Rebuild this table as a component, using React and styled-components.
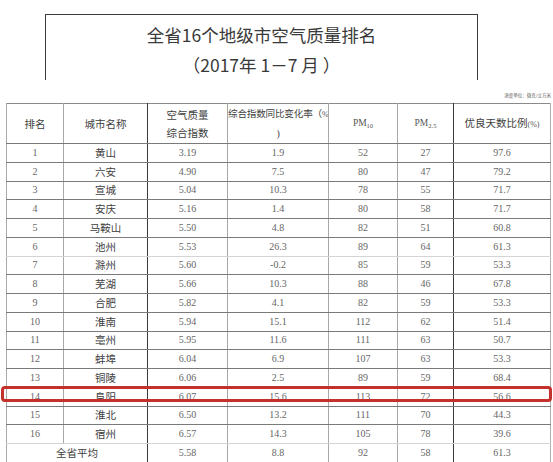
import React from 'react';
import styled, {createGlobalStyle} from 'styled-components';

const GlobalStyle = createGlobalStyle`
  html, body {
    margin: 0;
    padding: 0;
    background: #ffffff;
  }
`;

const CJK = `"Noto Sans CJK SC", "Noto Sans", sans-serif`;
const SERIF = `"Liberation Serif", "Noto Sans CJK SC", serif`;

const Page = styled.div`
  width: 553px;
  height: 462px;
  overflow: hidden;
  background: #fff;
  padding-top: 14px;
  box-sizing: border-box;
`;

const TitleBox = styled.div`
  margin-left: 45px;
  width: 433px;
  height: 66px;
  box-sizing: border-box;
  border: 1.5px solid #3c3c3c;
  border-bottom: none;
  display: flex;
  flex-direction: column;
  align-items: center;
  padding-top: 5px;
  font-family: ${CJK};
  color: #3a3a3a;
`;

const TitleLine = styled.div`
  font-size: 17.5px;
  line-height: 30px;
  height: 31px;
`;

const UnitNote = styled.div`
  display: flex;
  justify-content: flex-end;
  padding: 12px 2px 0 0;
  height: 11px;
  font-family: ${CJK};
  font-size: 4.5px;
  line-height: 6px;
  color: #555;
`;

const TableWrap = styled.div`
  position: relative;
  margin-left: 6px;
  width: 544px;
`;

const Table = styled.table`
  width: 544px;
  table-layout: fixed;
  border-collapse: collapse;
  border-top: 1px solid #8a8a8a;
`;

const HeadRow = styled.tr`
  height: 37px;
`;

const Row = styled.tr`
  height: 18.75px;
`;

const Cell = styled.td`
  padding: 0;
  text-align: center;
  vertical-align: middle;
  overflow: hidden;
  font-family: ${p => (p.$cjk ? CJK : SERIF)};
  font-size: ${p => (p.$cjk ? '10.5px' : '10px')};
  color: ${p => (p.$cjk ? '#3e3e3e' : '#666')};
  line-height: 12px;
  white-space: nowrap;
  border-bottom: 1px solid ${p => (p.$light ? '#d4d4d4' : '#7a7a7a')};
  border-left: 1px solid ${p => (p.$dark ? '#3a3a3a' : '#a8a8a8')};
  &:last-child {
    border-right: 1px solid #b0b0b0;
  }
`;

const HeadCell = styled(Cell)`
  font-family: ${CJK};
  font-size: ${p => (p.$tight ? '9.6px' : '10.5px')};
  letter-spacing: ${p => (p.$tight ? '-0.2px' : '0')};
  color: #3e3e3e;
  line-height: 18px;
`;

const Pm = styled.span`
  font-family: ${SERIF};
  font-size: 9.5px;
  color: #555;
  sub {
    font-size: 6.5px;
    vertical-align: -2px;
  }
`;

const Pct = styled.span`
  font-family: ${SERIF};
  font-size: 8px;
  letter-spacing: 0;
  color: #555;
`;

const Paren = styled.span`
  font-family: ${SERIF};
  font-size: 10px;
  color: #444;
`;

const Highlight = styled.div`
  position: absolute;
  left: -5px;
  width: 551px;
  height: 16px;
  box-sizing: border-box;
  border: 3px solid #c4302b;
  border-radius: 4px;
  pointer-events: none;
`;

const widths = [57, 84, 80, 101, 69, 56, 97];

const rows = [
  ['1', '黄山', '3.19', '1.9', '52', '27', '97.6'],
  ['2', '六安', '4.90', '7.5', '80', '47', '79.2'],
  ['3', '宣城', '5.04', '10.3', '78', '55', '71.7'],
  ['4', '安庆', '5.16', '1.4', '80', '58', '71.7'],
  ['5', '马鞍山', '5.50', '4.8', '82', '51', '60.8'],
  ['6', '池州', '5.53', '26.3', '89', '64', '61.3', true],
  ['7', '滁州', '5.60', '-0.2', '85', '59', '53.3'],
  ['8', '芜湖', '5.66', '10.3', '88', '46', '67.8'],
  ['9', '合肥', '5.82', '4.1', '82', '59', '53.3'],
  ['10', '淮南', '5.94', '15.1', '112', '62', '51.4'],
  ['11', '亳州', '5.95', '11.6', '111', '63', '50.7'],
  ['12', '蚌埠', '6.04', '6.9', '107', '63', '53.3'],
  ['13', '铜陵', '6.06', '2.5', '89', '59', '68.4'],
  ['14', '阜阳', '6.07', '15.6', '113', '72', '56.6'],
  ['15', '淮北', '6.50', '13.2', '111', '70', '44.3'],
  ['16', '宿州', '6.57', '14.3', '105', '78', '39.6', true],
];

const darkCol = i => i === 2 || i === 6;

export default function App() {
  return (
    <Page>
      <GlobalStyle />
      <TitleBox>
        <TitleLine>全省16个地级市空气质量排名</TitleLine>
        <TitleLine>（2017年 1－7 月 ）</TitleLine>
      </TitleBox>
      <UnitNote>浓度单位：微克/立方米</UnitNote>
      <TableWrap>
        <Table>
          <colgroup>
            {widths.map((w, i) => (
              <col key={i} style={{width: w}} />
            ))}
          </colgroup>
          <tbody>
            <HeadRow>
              <HeadCell>排名</HeadCell>
              <HeadCell>城市名称</HeadCell>
              <HeadCell $dark>
                空气质量
                <br />
                综合指数
              </HeadCell>
              <HeadCell $tight>
                综合指数同比变化率（<Pct>%</Pct>
                <br />
                <Paren>)</Paren>
              </HeadCell>
              <HeadCell>
                <Pm>
                  PM<sub>10</sub>
                </Pm>
              </HeadCell>
              <HeadCell>
                <Pm>
                  PM<sub>2.5</sub>
                </Pm>
              </HeadCell>
              <HeadCell $dark>
                优良天数比例<Pct>(%)</Pct>
              </HeadCell>
            </HeadRow>
            {rows.map(r => (
              <Row key={r[0]}>
                {r.slice(0, 7).map((v, i) => (
                  <Cell key={i} $cjk={i === 1} $dark={darkCol(i)} $light={r[7]}>
                    {v}
                  </Cell>
                ))}
              </Row>
            ))}
            <Row>
              <Cell colSpan={2} $cjk>
                全省平均
              </Cell>
              <Cell $dark>5.58</Cell>
              <Cell>8.8</Cell>
              <Cell>92</Cell>
              <Cell>58</Cell>
              <Cell $dark>61.3</Cell>
            </Row>
          </tbody>
        </Table>
        <Highlight style={{top: 37 + 13 * 18.75 + 2}} />
      </TableWrap>
    </Page>
  );
}
